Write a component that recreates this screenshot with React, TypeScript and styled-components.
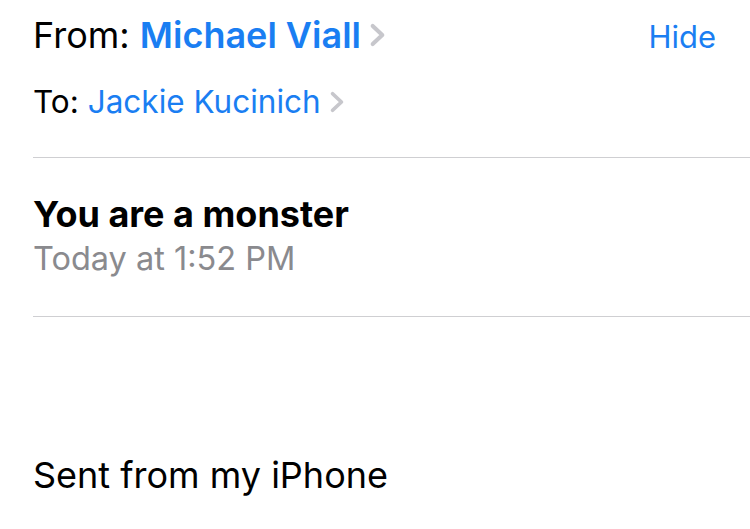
import React from 'react';
import styled, { createGlobalStyle } from 'styled-components';

const GlobalStyle = createGlobalStyle`
  body {
    margin: 0;
    background: #ffffff;
    font-family: Inter, "Liberation Sans", Arial, sans-serif;
    -webkit-font-smoothing: antialiased;
  }
`;

const Page = styled.div`
  width: 750px;
  height: 529px;
  overflow: hidden;
  padding-left: 33px;
  box-sizing: border-box;
  background: #fff;
`;

const Header = styled.div`
  padding-top: 11px;
  height: 157px;
  box-sizing: border-box;
`;

const Row = styled.div<{ $size: number; $height: number }>`
  display: flex;
  align-items: center;
  justify-content: space-between;
  font-size: ${p => p.$size}px;
  line-height: ${p => p.$height}px;
  height: ${p => p.$height}px;
  color: #000;
  padding-right: 34px;
`;

const Label = styled.span`
  display: flex;
  align-items: center;
  gap: 8px;
`;

const Name = styled.span<{ $bold?: boolean }>`
  color: #1a7ef2;
  font-weight: ${p => (p.$bold ? 600 : 400)};
`;

const Hide = styled.span`
  color: #1a7ef2;
  font-size: 31px;
  line-height: 48px;
  padding-top: 3px;
`;

const Chevron = styled.svg`
  flex: none;
`;

const Divider = styled.div`
  border-top: 1px solid #cfcfd2;
`;

const Subject = styled.div`
  height: 158px;
  padding-top: 34px;
  box-sizing: border-box;
`;

const Title = styled.div`
  font-size: 36px;
  font-weight: 700;
  line-height: 44px;
  color: #000;
`;

const Date = styled.div`
  font-size: 32.5px;
  line-height: 46px;
  color: #8a8a8e;
`;

const Body = styled.div`
  padding-top: 136px;
  font-size: 36px;
  line-height: 44px;
  color: #000;
`;

const Arrow = ({ w, h }: { w: number; h: number }) => (
  <Chevron width={w} height={h} viewBox="0 0 14 20">
    <path d="M3 2.5 L11 10 L3 17.5" fill="none" stroke="#c7c7cc" strokeWidth="3.4" strokeLinecap="round" strokeLinejoin="round" />
  </Chevron>
);

export default function App() {
  return (
    <Page>
      <GlobalStyle />
      <Header>
        <Row $size={36} $height={48}>
          <Label>
            <span>From: <Name $bold>Michael Viall</Name></span>
            <Arrow w={17} h={24} />
          </Label>
          <Hide>Hide</Hide>
        </Row>
        <Row $size={31.5} $height={85}>
          <Label>
            <span>To: <Name>Jackie Kucinich</Name></span>
            <Arrow w={16} h={22} />
          </Label>
        </Row>
      </Header>
      <Divider />
      <Subject>
        <Title>You are a monster</Title>
        <Date>Today at 1:52 PM</Date>
      </Subject>
      <Divider />
      <Body>Sent from my iPhone</Body>
    </Page>
  );
}
